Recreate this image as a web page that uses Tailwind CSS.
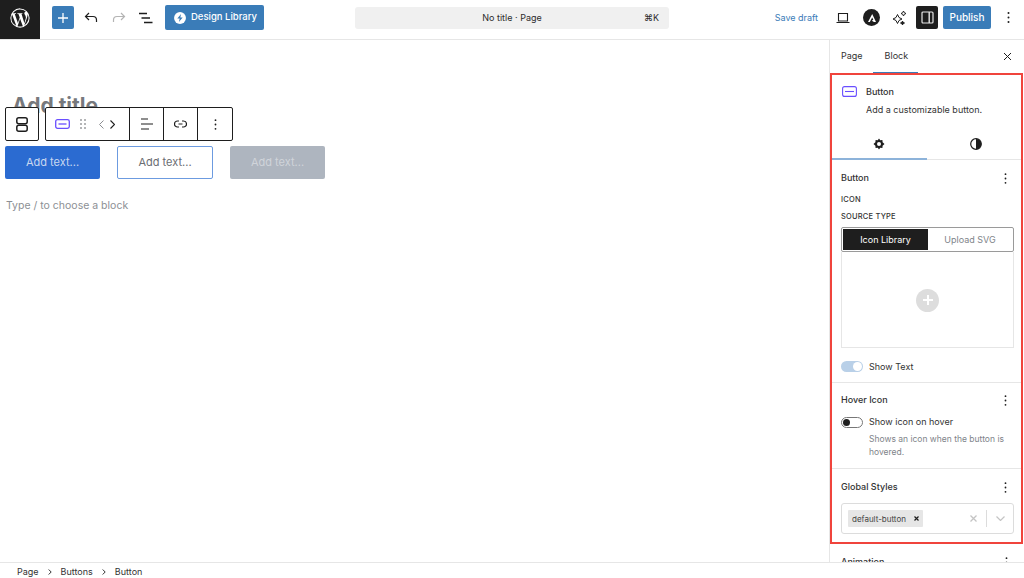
<!DOCTYPE html>
<html lang="en"><head><meta charset="utf-8"><title>Editor</title>
<script src="https://cdn.jsdelivr.net/npm/@tailwindcss/browser@4"></script></head>
<body class="w-[1024px] h-[578px] overflow-hidden bg-white font-['Inter','Liberation_Sans',sans-serif] text-[#1e1e1e]">
<div class="flex flex-col h-[578px]">
 <header class="h-10 shrink-0 flex items-center border-b border-[#e6e6e6] relative pb-[4px]">
  <div class="w-10 h-[39px] -mb-[4px] pb-[3px] bg-[#1e1e1e] flex items-center justify-center">
   <svg width="22" height="22" viewBox="0 0 24 24" fill="#fff"><path d="M12 1.500a10.500 10.500 0 1 0 0 21 10.500 10.500 0 0 0 0-21zM2.600 12c0-1.400.3-2.600.8-3.800l4.500 12.300A9.400 9.400 0 0 1 2.600 12zm9.400 9.400c-.9 0-1.800-.1-2.700-.4l2.800-8.200 2.900 8c0 .1 0 .1.100.1-1 .3-2 .5-3.100.5zm1.300-13.800c.6 0 1.100-.1 1.100-.1.500-.1.400-.8-.1-.8 0 0-1.500.1-2.500.1-.9 0-2.400-.1-2.400-.1-.5 0-.6.800-.1.800 0 0 .5.100 1 .1l1.400 3.900-2 6-3.400-9.900c.6 0 1.100-.1 1.100-.1.500-.1.400-.8-.1-.8 0 0-1.500.1-2.500.1h-.6A9.400 9.400 0 0 1 12 2.600c2.400 0 4.700.9 6.400 2.500h-.1c-.9 0-1.600.8-1.600 1.700 0 .8.500 1.400 1 2.200.3.600.7 1.400.7 2.500 0 .8-.3 1.700-.7 3l-.9 3.100-3.100-10zm3.400 12.500 2.900-8.300c.5-1.300.7-2.400.7-3.300 0-.3 0-.6-.1-.9a9.400 9.400 0 0 1-3.500 12.500z"/></svg>
  </div>
  <div class="ml-[12px] w-[22px] h-[23px] bg-[#3a7cb8] rounded-[2px] flex items-center justify-center">
   <svg width="10" height="10" viewBox="0 0 10 10" stroke="#fff" stroke-width="1.300"><path d="M5 0v10M0 5h10"/></svg>
  </div>
  <svg class="ml-[9px]" width="16" height="16" viewBox="0 0 16 16" fill="none" stroke="#1e1e1e" stroke-width="1.200"><path d="M6 3 2.500 6.500 6 10M2.500 6.500H10a3.500 3.500 0 0 1 3.500 3.500v2"/></svg>
  <svg class="ml-[12px]" width="16" height="16" viewBox="0 0 16 16" fill="none" stroke="#b4b4b4" stroke-width="1.200"><path d="M10 3l3.500 3.500L10 10M13.500 6.500H6A3.500 3.500 0 0 0 2.500 10v2"/></svg>
  <svg class="ml-[12px]" width="14" height="14" viewBox="0 0 14 14" fill="none" stroke="#1e1e1e" stroke-width="1.300"><path d="M0 2.500h8M2.500 7H11M5 11.500h8.500"/></svg>
  <div class="ml-[12px] w-[99px] h-[25px] bg-[#3a7cb8] rounded-[2px] flex items-center pl-[8px] gap-[4px] text-white text-[9.500px] font-medium whitespace-nowrap">
   <svg width="14" height="14" viewBox="0 0 13 13"><circle cx="6.500" cy="6.500" r="5.500" fill="#fff"/><path d="M7.500 2.800 4 7h2.200L5.500 10.200 9 6H6.800z" fill="#3a7cb8"/></svg>
   <span>Design Library</span>
  </div>
  <div class="absolute left-[355px] top-[7px] w-[314px] h-[22px] bg-[#f0f0f0] rounded-[3px] flex items-center justify-center text-[9px] text-[#2c2c2c]">
   <span>No title · Page</span>
   <span class="absolute right-[10px]">⌘K</span>
  </div>
  <div class="ml-auto flex items-center">
   <span class="text-[9px] text-[#3a7cb8] mr-[18px]">Save draft</span>
   <svg class="mr-[13px]" width="14" height="12" viewBox="0 0 14 12" fill="none" stroke="#1e1e1e" stroke-width="1.100"><path d="M2.500 1.500h9v7.500h-9zM.5 10.500h13"/></svg>
   <div class="w-[17px] h-[17px] rounded-full bg-[#1e1e1e] flex items-center justify-center mr-[11px]">
    <svg width="10" height="10" viewBox="0 0 10 10" fill="#fff"><path d="M5.200 1 1 9h1.800L5.200 4.600 6.300 6.800 4.800 7.800 7 9h2z"/></svg>
   </div>
   <svg class="mr-[9px]" width="16" height="16" viewBox="0 0 16 16" fill="none" stroke="#1e1e1e" stroke-width="1"><path d="M6.500 4.500 8 7.500l3 1.500-3 1.500-1.500 3-1.500-3-3-1.500 3-1.500zM12.500 1l.8 1.700 1.700.8-1.700.8-.8 1.700-.8-1.700-1.700-.8 1.700-.8z"/><path d="m11.500 11 .6 1.400 1.400.6-1.400.6-.6 1.400-.6-1.400-1.400-.6 1.400-.6z" fill="#1e1e1e"/></svg>
   <div class="w-[22px] h-[23px] bg-[#1e1e1e] rounded-[2px] flex items-center justify-center mr-[5px]">
    <svg width="13" height="13" viewBox="0 0 13 13" fill="none" stroke="#e8e8e8" stroke-width="1.200"><rect x="1" y="1" width="11" height="11" rx="1"/><path d="M8.200 1v11" stroke-width="1.400"/></svg>
   </div>
   <div class="w-[48px] h-[23px] bg-[#3a7cb8] rounded-[2px] flex items-center justify-center text-white text-[10px] font-medium mr-[16px]">Publish</div>
   <svg class="mr-[14px]" width="3" height="13" viewBox="0 0 3 13" fill="#1e1e1e"><circle cx="1.500" cy="2" r="1"/><circle cx="1.500" cy="6.500" r="1"/><circle cx="1.500" cy="11" r="1"/></svg>
  </div>
 </header>

 <div class="flex-1 flex min-h-0">
  <main class="flex-1 relative overflow-hidden">
   <div class="pl-[12px] pt-[53px] h-[85px] text-[21px] font-bold text-[#77797d] leading-[26px]">Add title</div>
   <div class="absolute left-[5px] top-[67px] flex gap-[6px] z-10">
    <div class="w-[34px] h-[34px] bg-white border border-[#1e1e1e] rounded-[2px] flex items-center justify-center">
     <svg width="12" height="15" viewBox="0 0 12 15" fill="none" stroke="#1e1e1e" stroke-width="1.500"><rect x=".8" y=".8" width="10.400" height="6" rx="2"/><rect x=".8" y="8.200" width="10.400" height="6" rx="2"/></svg>
    </div>
    <div class="h-[34px] bg-white border border-[#1e1e1e] rounded-[2px] flex">
     <div class="w-[84px] flex items-center pl-[9px] border-r border-[#1e1e1e]">
      <svg width="15" height="10" viewBox="0 0 15 10" fill="none" stroke="#6a4fff" stroke-width="1.300"><rect x=".7" y=".7" width="13.600" height="8.600" rx="1.800"/><path d="M3.500 5h8"/></svg>
      <svg class="ml-[10px]" width="6" height="10" viewBox="0 0 6 10" fill="#55585c"><circle cx="1" cy="1" r=".8"/><circle cx="5" cy="1" r=".8"/><circle cx="1" cy="5" r=".8"/><circle cx="5" cy="5" r=".8"/><circle cx="1" cy="9" r=".8"/><circle cx="5" cy="9" r=".8"/></svg>
      <svg class="ml-[13px]" width="5" height="9" viewBox="0 0 5 9" fill="none" stroke="#8a8c90" stroke-width="1"><path d="M4.500.500l-4 4 4 4"/></svg>
      <svg class="ml-[6px]" width="5" height="9" viewBox="0 0 5 9" fill="none" stroke="#1e1e1e" stroke-width="1.100"><path d="M.5.500l4 4-4 4"/></svg>
     </div>
     <div class="w-[34px] flex items-center justify-center border-r border-[#1e1e1e]">
      <svg width="12" height="12" viewBox="0 0 12 12" stroke="#1e1e1e" stroke-width="1.100"><path d="M0 1h7M0 6h12M0 11h8"/></svg>
     </div>
     <div class="w-[34px] flex items-center justify-center border-r border-[#1e1e1e]">
      <svg width="13" height="8" viewBox="0 0 13 8" fill="none" stroke="#1e1e1e" stroke-width="1.200"><path d="M5 1H3.500a3 3 0 0 0 0 6H5M8 1h1.500a3 3 0 0 1 0 6H8M4.500 4h4"/></svg>
     </div>
     <div class="w-[34px] flex items-center justify-center">
      <svg width="3" height="11" viewBox="0 0 3 11" fill="#1e1e1e"><circle cx="1.500" cy="1.200" r=".9"/><circle cx="1.500" cy="5.500" r=".9"/><circle cx="1.500" cy="9.800" r=".9"/></svg>
     </div>
    </div>
   </div>
   <div class="pl-[5px] pt-[21px] flex text-[11px]">
    <div class="w-[95px] h-[33px] bg-[#2b6bd1] rounded-[2px] flex items-center justify-center text-[#c9d8f0]">Add text...</div>
    <div class="ml-[17px] w-[96px] h-[33px] border border-[#6c9be0] rounded-[2px] flex items-center justify-center text-[#6a6d72]">Add text...</div>
    <div class="ml-[17px] w-[95px] h-[33px] bg-[#aeb5bf] rounded-[2px] flex items-center justify-center text-[#d0d4da]">Add text...</div>
   </div>
   <p class="pl-[6px] pt-[20px] text-[10.500px] leading-[14px] text-[#8c8f94]">Type / to choose a block</p>
  </main>

  <aside class="w-[195px] shrink-0 border-l border-[#e6e6e6] overflow-hidden">
   <div class="h-[33px] flex items-center pl-[11px] pb-[1px] text-[9px] relative">
    <span class="text-[#333]">Page</span>
    <span class="ml-[22px] text-[#333]">Block</span>
    <span class="absolute left-[43px] bottom-0 w-[45px] h-px bg-[#3a7cb8]"></span>
    <svg class="absolute right-[12px] top-[12px]" width="9" height="9" viewBox="0 0 9 9" stroke="#1e1e1e" stroke-width="1"><path d="M1 1l7 7M8 1 1 8"/></svg>
   </div>
   <div class="w-[193px] h-[471px] border-[2px] border-[#f0443c]">
    <div class="h-[85px] relative border-b border-[#e6e6e6]">
     <svg class="absolute left-[10px] top-[11px]" width="15" height="11" viewBox="0 0 15 11" fill="none" stroke="#6a4fff" stroke-width="1.100"><rect x=".6" y=".6" width="13.800" height="9.800" rx="2"/><path d="M3 5.500h9"/></svg>
     <div class="absolute left-[34px] top-[11px] text-[9px] leading-[12px] font-medium text-[#333]">Button</div>
     <div class="absolute left-[34px] top-[29px] text-[9px] leading-[12px] text-[#333]">Add a customizable button.</div>
     <div class="absolute left-0 bottom-[-1px] w-[95px] h-[2px] bg-[#8db3da]"></div>
     <svg class="absolute left-[41px] top-[63px]" width="12" height="12" viewBox="0 0 24 24" fill="#1e1e1e"><path d="M12 1l2.500 3.500 4.300-.4.400 4.300L23 12l-3.800 3.600-.4 4.300-4.300-.4L12 23l-2.500-3.500-4.300.4-.4-4.300L1 12l3.800-3.600.4-4.300 4.300.4zM12 8a4 4 0 1 0 0 8 4 4 0 0 0 0-8z" fill-rule="evenodd"/></svg>
     <svg class="absolute left-[138px] top-[63px]" width="12" height="12" viewBox="0 0 12 12"><circle cx="6" cy="6" r="5.300" fill="#fff" stroke="#1e1e1e" stroke-width="1.200"/><path d="M6 .7a5.300 5.300 0 0 1 0 10.600z" fill="#1e1e1e"/></svg>
    </div>
    <div class="h-[223px] pl-[9px] pr-[7px] border-b border-[#e6e6e6]">
     <div class="pt-[12px] flex justify-between items-center text-[9px] leading-[12px] font-medium text-[#333]">
      <span>Button</span>
      <svg class="mr-[7px]" width="3" height="11" viewBox="0 0 3 11" fill="#1e1e1e"><circle cx="1.500" cy="1.200" r=".9"/><circle cx="1.500" cy="5.500" r=".9"/><circle cx="1.500" cy="9.800" r=".9"/></svg>
     </div>
     <div class="mt-[11px] text-[7.500px] leading-[10px] font-medium tracking-[0.2px] text-[#333]">ICON</div>
     <div class="mt-[7px] text-[7.500px] leading-[10px] font-medium tracking-[0.2px] text-[#333]">SOURCE TYPE</div>
     <div class="mt-[5px] h-[25px] border border-[#9a9a9a] rounded-[2px] p-[1px] flex text-[9px]">
      <div class="w-[85px] bg-[#1e1e1e] text-white flex items-center justify-center">Icon Library</div>
      <div class="flex-1 text-[#80848a] flex items-center justify-center">Upload SVG</div>
     </div>
     <div class="h-[96px] pt-[1px] border border-t-0 border-[#e6e6e6] flex items-center justify-center">
      <div class="w-[23px] h-[23px] rounded-full bg-[#dddddd] flex items-center justify-center">
       <svg width="10" height="10" viewBox="0 0 10 10" stroke="#fff" stroke-width="2"><path d="M5 0v10M0 5h10"/></svg>
      </div>
     </div>
     <div class="mt-[12px] flex items-center">
      <div class="w-[22px] h-[11px] rounded-full bg-[#b9d0e8] relative"><span class="absolute right-[1px] top-[1px] w-[9px] h-[9px] rounded-full bg-white"></span></div>
      <span class="ml-[6px] text-[9px] text-[#333]">Show Text</span>
     </div>
    </div>
    <div class="h-[86px] pl-[9px] pr-[7px] border-b border-[#e6e6e6]">
     <div class="pt-[11px] flex justify-between items-center text-[9px] leading-[12px] font-medium text-[#333]">
      <span>Hover Icon</span>
      <svg class="mr-[7px]" width="3" height="11" viewBox="0 0 3 11" fill="#1e1e1e"><circle cx="1.500" cy="1.200" r=".9"/><circle cx="1.500" cy="5.500" r=".9"/><circle cx="1.500" cy="9.800" r=".9"/></svg>
     </div>
     <div class="mt-[10px] flex items-center">
      <div class="w-[22px] h-[11px] rounded-full border border-[#777] relative"><span class="absolute left-[1px] top-[1px] w-[7px] h-[7px] rounded-full bg-[#1e1e1e]"></span></div>
      <span class="ml-[6px] text-[9px] leading-[12px] text-[#333]">Show icon on hover</span>
     </div>
     <p class="mt-[5px] ml-[28px] text-[8.500px] leading-[12.500px] text-[#80848a]">Shows an icon when the button is hovered.</p>
    </div>
    <div class="pl-[9px] pr-[7px]">
     <div class="pt-[12px] flex justify-between items-center text-[9px] leading-[12px] font-medium text-[#333]">
      <span>Global Styles</span>
      <svg class="mr-[7px]" width="3" height="11" viewBox="0 0 3 11" fill="#1e1e1e"><circle cx="1.500" cy="1.200" r=".9"/><circle cx="1.500" cy="5.500" r=".9"/><circle cx="1.500" cy="9.800" r=".9"/></svg>
     </div>
     <div class="mt-[10px] h-[31px] border border-[#dcdcdc] rounded-[3px] flex items-center pl-[6px]">
      <div class="w-[75px] h-[17px] bg-[#e6e6e6] rounded-[1px] flex items-center pl-[4px] text-[8px] text-[#444] whitespace-nowrap">default-button
       <svg class="ml-[8px]" width="5" height="5" viewBox="0 0 5 5" stroke="#1e1e1e" stroke-width="1.200"><path d="M.5.500l4 4M4.500.500l-4 4"/></svg>
      </div>
      <svg class="ml-[47px]" width="7" height="7" viewBox="0 0 7 7" stroke="#c4c4c4" stroke-width="1.300"><path d="M.5.500l6 6M6.500.500l-6 6"/></svg>
      <span class="ml-[9px] w-px h-[17px] bg-[#dcdcdc]"></span>
      <svg class="ml-[9px]" width="9" height="5" viewBox="0 0 9 5" fill="none" stroke="#c4c4c4" stroke-width="1.200"><path d="M.5.500l4 4 4-4"/></svg>
     </div>
    </div>
   </div>
   <div class="pl-[11px] pr-[16px] pt-[12px] flex justify-between items-center text-[9px] leading-[12px] font-medium text-[#333]">
    <span>Animation</span>
    <svg width="3" height="11" viewBox="0 0 3 11" fill="#1e1e1e"><circle cx="1.500" cy="1.200" r=".9"/><circle cx="1.500" cy="5.500" r=".9"/><circle cx="1.500" cy="9.800" r=".9"/></svg>
   </div>
  </aside>
 </div>

 <footer class="h-[16px] shrink-0 border-t border-[#e6e6e6] bg-white flex items-center pl-[17px] pt-[3px] text-[9px] text-[#333] relative z-20">
  <span>Page</span>
  <svg class="mx-[9px]" width="4" height="6" viewBox="0 0 4 6" fill="none" stroke="#333" stroke-width="1"><path d="M.7.500l2.500 2.500-2.500 2.500"/></svg>
  <span>Buttons</span>
  <svg class="mx-[9px]" width="4" height="6" viewBox="0 0 4 6" fill="none" stroke="#333" stroke-width="1"><path d="M.7.500l2.500 2.500-2.500 2.500"/></svg>
  <span>Button</span>
 </footer>
</div>
</body></html>
